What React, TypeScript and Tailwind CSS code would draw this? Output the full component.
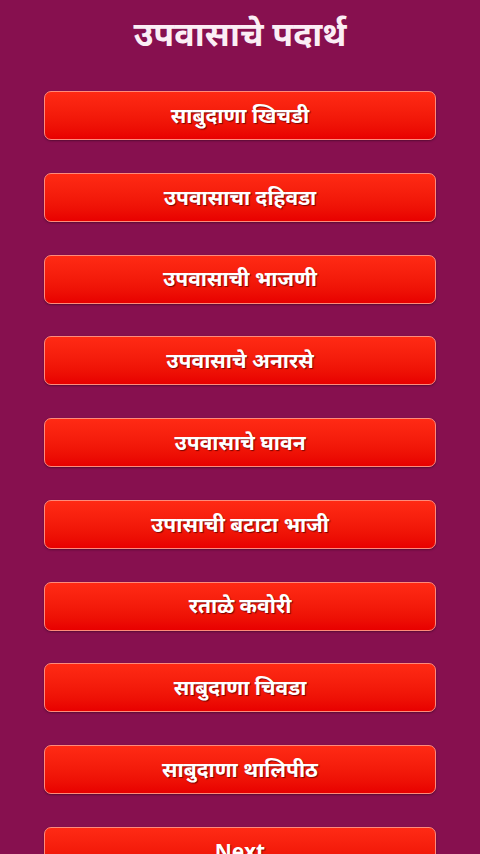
const items = [
  "साबुदाणा खिचडी",
  "उपवासाचा दहिवडा",
  "उपवासाची भाजणी",
  "उपवासाचे अनारसे",
  "उपवासाचे घावन",
  "उपासाची बटाटा भाजी",
  "रताळे कवोरी",
  "साबुदाणा चिवडा",
  "साबुदाणा थालिपीठ",
];

function MenuButton({ label }: { label: string }) {
  return (
    <button
      type="button"
      className="flex h-[49px] w-[392px] shrink-0 items-center justify-center rounded-[7px] border border-[#ff8a7a] bg-gradient-to-b from-[#ff2a14] to-[#e80000] text-[21px] font-bold text-white shadow-[0_1px_2px_rgba(0,0,0,0.35)] [text-shadow:1px_1px_1px_rgba(90,0,0,0.8)]"
    >
      {label}
    </button>
  );
}

export default function App() {
  return (
    <div
      className="flex h-[854px] w-[480px] flex-col items-center overflow-hidden bg-[#87104f]"
      style={{ fontFamily: '"Noto Sans", "Noto Sans Devanagari", "Lohit Devanagari", sans-serif' }}
    >
      <h1 className="mt-[10px] text-[34px] font-bold leading-[46px] text-[#fbeef5]">उपवासाचे पदार्थ</h1>
      <div className="mt-[35px] flex flex-col items-center gap-[32.75px]">
        {items.map((item) => (
          <MenuButton key={item} label={item} />
        ))}
        <MenuButton label="Next" />
      </div>
    </div>
  );
}
